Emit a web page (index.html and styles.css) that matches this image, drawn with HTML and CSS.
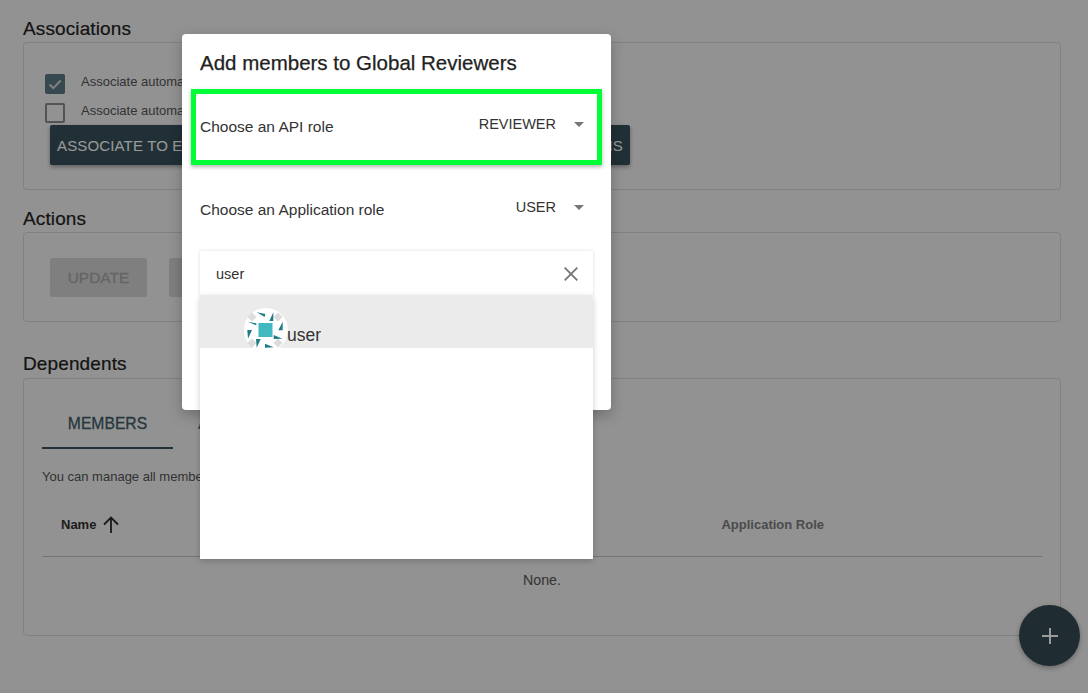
FILE: index.html
```html
<!DOCTYPE html>
<html lang="en">
<head>
<meta charset="utf-8">
<title>Global Reviewers</title>
<link rel="stylesheet" href="styles.css">
</head>
<body>
<main class="page">
  <h2 class="section-title first">Associations</h2>
  <section class="card card-assoc">
    <div class="check-row">
      <span class="checkbox checked"><svg viewBox="0 0 20 20" width="20" height="20"><path d="M4.500 10.500l3.800 3.600 7.400-7.600" fill="none" stroke="#d8d8d8" stroke-width="2"/></svg></span>
      <span class="check-label">Associate automatically to new APIs</span>
    </div>
    <div class="check-row second">
      <span class="checkbox"></span>
      <span class="check-label">Associate automatically to new applications</span>
    </div>
    <div class="button-row">
      <button class="btn dark apis">ASSOCIATE TO EXISTING APIS</button>
      <button class="btn dark apps">ASSOCIATE TO EXISTING APPLICATIONS</button>
    </div>
  </section>

  <h2 class="section-title">Actions</h2>
  <section class="card card-actions">
    <button class="btn disabled update">UPDATE</button>
    <button class="btn disabled reset" aria-label="Reset"></button>
  </section>

  <h2 class="section-title deps">Dependents</h2>
  <section class="card card-deps">
    <div class="tabs">
      <div class="tab active">MEMBERS</div>
      <div class="tab next">APIS</div>
    </div>
    <p class="help">You can manage all members of this group here.</p>
    <div class="table-head">
      <span class="th name">Name <svg class="arrow" viewBox="0 0 18 18" width="18" height="18"><path d="M9 17V2M2 8.500l7-7 7 7" fill="none" stroke="#2b2b2b" stroke-width="1.800"/></svg></span>
      <span class="th app-role">Application Role</span>
    </div>
    <div class="none">None.</div>
  </section>
</main>

<div class="backdrop"></div>

<button class="fab" aria-label="Add"><svg viewBox="0 0 18 18" width="18" height="18"><path d="M9 1v16M1 9h16" stroke="#9a9a9a" stroke-width="2" fill="none"/></svg></button>

<div class="dialog">
  <h1 class="dialog-title">Add members to Global Reviewers</h1>
  <div class="role-row highlighted">
    <span class="role-label">Choose an API role</span>
    <span class="role-select"><span class="role-value">REVIEWER</span><span class="caret"></span></span>
  </div>
  <div class="role-row plain">
    <span class="role-label">Choose an Application role</span>
    <span class="role-select"><span class="role-value">USER</span><span class="caret"></span></span>
  </div>
  <div class="search-box">
    <span class="search-text">user</span>
    <svg class="clear" viewBox="0 0 14 14" width="14" height="14"><path d="M.7.7l12.600 12.600M13.300.7L.7 13.300" stroke="#757575" stroke-width="1.800" fill="none"/></svg>
  </div>
</div>

<div class="results">
  <div class="result">
    <svg class="avatar" viewBox="0 0 44 44" width="44" height="44">
      <circle cx="22" cy="22" r="22" fill="#fff"/>
      <rect x="14.500" y="15" width="14" height="14" fill="#41b9c1"/>
      <g fill="#dcdcdc">
        <path d="M8 4.500l4.500 4.500-4.500 4.500-4.500-4.500z"/><path d="M34 4.500l4.500 4.500-4.500 4.500-4.500-4.500z"/>
        <path d="M8 30.500l4.500 4.500-4.500 4.500-4.500-4.500z"/><path d="M34 30.500l4.500 4.500-4.500 4.500-4.500-4.500z"/>
      </g>
      <g fill="#1f7c86">
        <path d="M12.700 4.300l8.600 1.700-.6 3z"/><path d="M29.300 4.300v8.700h-4z"/>
        <path d="M3.700 13.700l8.600 1.600v2z"/><path d="M38.700 13.700v8.600h-4.400z"/>
        <path d="M3.300 22h4.700l-4 8.700z"/><path d="M29.700 27l8.600 3.700-8.600.3z"/>
        <path d="M12 31h4.700l-4 8.700z"/><path d="M21 35.700l8.700 3.600-8.700.4z"/>
      </g>
    </svg>
    <span class="result-name">user</span>
  </div>
</div>
```
FILE: styles.css
```css
* { box-sizing: border-box; }
html, body { margin: 0; height: 100%; }
body {
  font-family: "Liberation Sans", Arial, sans-serif;
  background: #f4f4f4;
  color: #222;
  overflow: hidden;
}
.page { padding: 18px 27px 0 23px; }
.section-title {
  margin: 18px 0 2px;
  font-size: 19px;
  letter-spacing: .12px;
  line-height: 22px;
  font-weight: 400;
  color: #222;
  -webkit-text-stroke: .2px #222;
}
.section-title.first { margin: 0 0 2px; }
.section-title.deps { margin: 31px 0 3px; }
.card {
  border: 1px solid #d8d8d8;
  border-radius: 4px;
  background: #f4f4f4;
}
.card-assoc { height: 148px; padding: 31px 21px 0; }
.check-row { display: flex; align-items: flex-start; height: 29px; }
.checkbox {
  width: 20px;
  height: 20px;
  border: 2px solid #8a8a8a;
  border-radius: 2px;
  flex: none;
  display: block;
}
.checkbox.checked { background: #5a7886; border: 0; }
.checkbox svg { display: block; }
.check-label { margin-left: 16px; font-size: 13px; line-height: 15px; color: #555; white-space: nowrap; }
.check-row.second { height: 22px; }
.button-row { display: flex; gap: 10px; margin-left: 5px; }
.btn {
  height: 40px;
  border: 0;
  border-radius: 2px;
  font-family: inherit;
  font-size: 15px;
  letter-spacing: .15px;
  padding: 0;
  white-space: nowrap;
}
.btn.dark { background: #37505a; color: #fff; box-shadow: 0 2px 4px rgba(0,0,0,.35); line-height: 42px; }
.apis { width: 240px; text-align: left; padding-left: 7px; }
.apps { width: 330px; text-align: right; padding-right: 7px; }
.card-actions { height: 90px; padding: 25px 26px 0; display: flex; gap: 22px; align-items: flex-start; }
.btn.disabled { background: #d4d4d4; color: #a8a8a8; height: 39px; width: 97px; font-size: 15.500px; letter-spacing: 0; -webkit-text-stroke: .3px #a8a8a8; }
.card-deps { height: 258px; padding: 22px 18px 0; }
.tabs { display: flex; gap: 25px; }
.tab { width: 131px; height: 48px; line-height: 46px; text-align: center; font-size: 15.700px; color: #555; }
.tab.next { text-align: left; }
.tab.active { color: #3f5c68; border-bottom: 2px solid #37505a; -webkit-text-stroke: .3px #3f5c68; }
.help { margin: 20px 0 0; font-size: 13px; line-height: 16px; color: #555; }
.table-head {
  margin-top: 13px;
  height: 59px;
  width: 1000px;
  padding-bottom: 5px;
  border-bottom: 1px solid #c4c4c4;
  display: flex;
  align-items: center;
}
.th { font-size: 13px; font-weight: 700; }
.name { margin-left: 19px; color: #333; display: flex; align-items: center; gap: 6px; }
.app-role { margin-left: 601px; color: #7d7d7d; }
.arrow { display: block; }
.none { text-align: center; margin-top: 15px; width: 1000px; font-size: 14.200px; line-height: 16px; color: #555; }
.backdrop { position: absolute; inset: 0; background: rgba(0,0,0,.4); }
.fab {
  position: absolute;
  left: 1019px;
  top: 605px;
  width: 61px;
  height: 61px;
  border: 0;
  padding: 0;
  border-radius: 50%;
  background: #1f2d33;
  box-shadow: 0 2px 5px rgba(0,0,0,.3);
  display: flex;
  align-items: center;
  justify-content: center;
}
.dialog {
  position: absolute;
  left: 182px;
  top: 34px;
  width: 429px;
  height: 376px;
  background: #fff;
  border-radius: 4px;
  box-shadow: 0 5px 14px rgba(0,0,0,.25);
  padding: 18px 18px 0;
}
.dialog-title { margin: 0 0 15px; font-size: 20.500px; line-height: 22px; font-weight: 400; color: #222; -webkit-text-stroke: .25px #222; }
.role-row { display: flex; justify-content: space-between; align-items: flex-start; }
.role-label { font-size: 15.500px; line-height: 18px; color: #333; }
.role-select { display: flex; align-items: center; gap: 18px; font-size: 14.500px; line-height: 18px; color: #333; }
.caret { width: 0; height: 0; border: 5px solid transparent; border-top-color: #777; border-bottom: 0; }
.highlighted {
  margin: 0 -9px;
  padding: 21px 13px 0 4px;
  height: 76px;
  border: 5px solid #00ff37;
  box-shadow: 0 2px 4px rgba(0,0,0,.3);
}
.highlighted .role-label { margin-top: 3px; }
.plain { height: 86px; padding: 33px 9px 0 0; }
.plain .role-label { margin-top: 3px; }
.search-box {
  height: 44px;
  width: 393px;
  display: flex;
  align-items: center;
  justify-content: space-between;
  padding: 1px 15px 0 16px;
  box-shadow: 0 0 3px rgba(0,0,0,.15);
}
.search-text { font-size: 14.500px; color: #333; }
.clear { display: block; }
.results {
  position: absolute;
  left: 200px;
  top: 295px;
  width: 393px;
  height: 264px;
  background: #fff;
  box-shadow: 0 2px 6px rgba(0,0,0,.2);
}
.result {
  height: 53px;
  background: #ebebeb;
  overflow: hidden;
  display: flex;
  align-items: flex-start;
  padding: 13px 0 0 44px;
}
.avatar { flex: none; display: block; margin-right: -1px; }
.result-name { font-size: 17.500px; line-height: 20px; margin-top: 17px; color: #333; }
```
